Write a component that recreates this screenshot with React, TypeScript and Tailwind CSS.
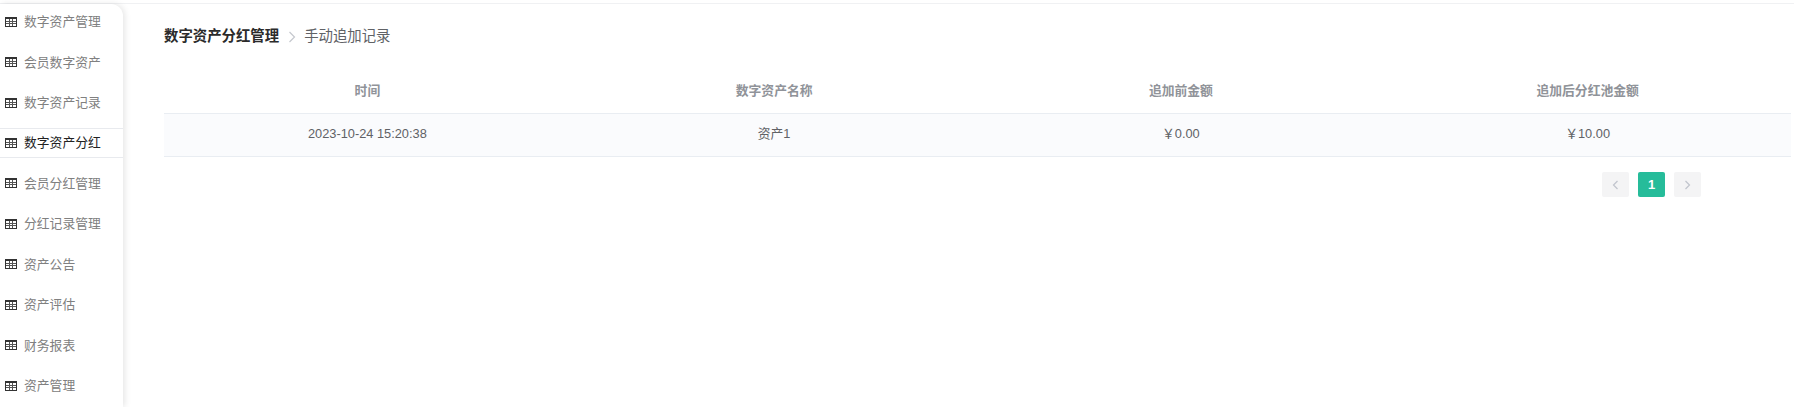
import React from "react";

const menu = ["数字资产管理", "会员数字资产", "数字资产记录", "数字资产分红", "会员分红管理", "分红记录管理", "资产公告", "资产评估", "财务报表", "资产管理"];

function TableIcon() {
  return (
    <svg width="12" height="10" viewBox="0 0 12 10" className="shrink-0" shapeRendering="crispEdges">
      <rect x="0.5" y="0.5" width="11" height="9" fill="none" stroke="#333" />
      <rect x="0" y="0" width="12" height="2" fill="#333" />
      <path d="M4.5 2V9M7.5 2V9M1 4.5H11M1 6.5H11" stroke="#555" fill="none" />
    </svg>
  );
}

export default function App() {
  const font = "font-['Liberation_Sans','Noto_Sans_CJK_SC',sans-serif]";
  return (
    <div className={`w-[1794px] h-[407px] overflow-hidden bg-white flex flex-col ${font}`}>
      <div className="h-[4px] shrink-0 border-b border-[#f0f1f3] bg-white" />
      <div className="flex flex-1 min-h-0">
        <aside className="w-[123px] shrink-0 bg-white rounded-tr-[12px] shadow-[2px_0_6px_rgba(0,0,0,0.1)] pt-[2.5px] flex flex-col gap-[10.05px] overflow-hidden">
          {menu.map((m, i) => (
            <div
              key={m}
              className={`h-[30.4px] shrink-0 flex items-center gap-[7px] pl-[5px] text-[12.8px] ${
                i === 3 ? "border-y border-[#e8eaee] text-[#222]" : "text-[#808080]"
              }`}
            >
              <TableIcon />
              <span>{m}</span>
            </div>
          ))}
        </aside>
        <main className="flex-1 min-w-0 pl-[41px] pr-[3px]">
          <div className="flex items-center h-[20px] mt-[23px] text-[14.4px]">
            <span className="font-bold text-[#2b2b2b]">数字资产分红管理</span>
            <svg width="8" height="12" viewBox="0 0 8 12" className="ml-[9px] mr-[8px]">
              <path d="M1.5 1L6.5 6L1.5 11" fill="none" stroke="#c5c8ce" strokeWidth="1.2" />
            </svg>
            <span className="text-[#606266]">手动追加记录</span>
          </div>
          <div className="mt-[23px] text-[12.8px]">
            <div className="grid grid-cols-4 h-[44px] pb-[2px] items-center text-center font-bold text-[#909399] border-b border-[#e9edf2]">
              <div>时间</div>
              <div>数字资产名称</div>
              <div>追加前金额</div>
              <div>追加后分红池金额</div>
            </div>
            <div className="grid grid-cols-4 h-[43px] pb-[2px] items-center text-center text-[#606266] bg-[#fafbfd] border-b border-[#e9edf2]">
              <div>2023-10-24 15:20:38</div>
              <div>资产1</div>
              <div>￥0.00</div>
              <div>￥10.00</div>
            </div>
          </div>
          <div className="flex justify-end gap-[9px] mt-[15px] pr-[90px]">
            <button className="w-[27px] h-[25px] rounded-[2px] bg-[#f4f4f5] flex items-center justify-center">
              <svg width="7" height="10" viewBox="0 0 7 10"><path d="M5.5 1L1.5 5L5.5 9" fill="none" stroke="#c0c4cc" strokeWidth="1.2" /></svg>
            </button>
            <button className="w-[27px] h-[25px] rounded-[2px] bg-[#26bc9a] text-white text-[13px] font-bold flex items-center justify-center">1</button>
            <button className="w-[27px] h-[25px] rounded-[2px] bg-[#f4f4f5] flex items-center justify-center">
              <svg width="7" height="10" viewBox="0 0 7 10"><path d="M1.5 1L5.5 5L1.5 9" fill="none" stroke="#c0c4cc" strokeWidth="1.2" /></svg>
            </button>
          </div>
        </main>
      </div>
    </div>
  );
}
